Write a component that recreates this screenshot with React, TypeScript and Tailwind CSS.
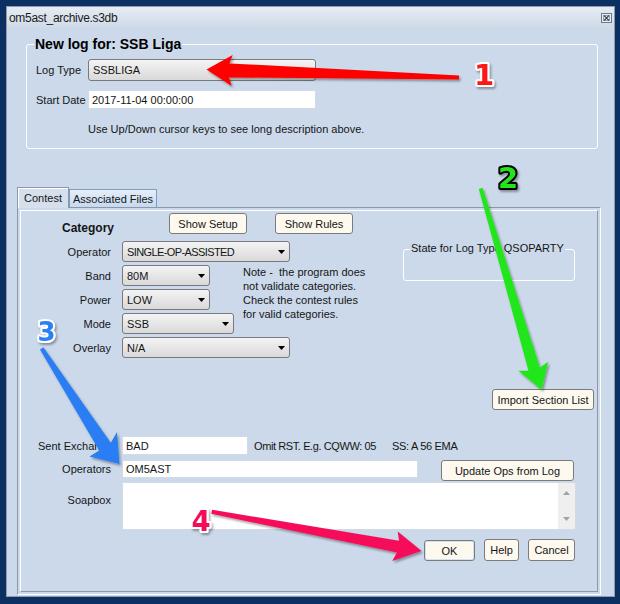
import React from 'react';

type BoxProps = { className?: string; children?: React.ReactNode };

const Caret: React.FC<{ color?: string }> = ({ color = '#000' }) => (
  <svg width="7" height="4" viewBox="0 0 7 4" className="shrink-0">
    <polygon points="0,0 7,0 3.5,4" fill={color} />
  </svg>
);

const CaretUp: React.FC = () => (
  <svg width="7" height="4" viewBox="0 0 7 4">
    <polygon points="0,4 7,4 3.5,0" fill="#a3a3a3" />
  </svg>
);

const Select: React.FC<BoxProps & { caret?: boolean; textClass?: string }> = ({
  className = '',
  children,
  caret = true,
  textClass = '',
}) => (
  <div
    className={`flex h-[21px] items-center justify-between rounded-[3px] border border-[#7a7a7a] bg-linear-to-b from-[#f4f4f4] to-[#d9d9d9] pl-[4px] pr-[4px] ${className}`}
  >
    <span className={`whitespace-nowrap ${textClass}`}>{children}</span>
    {caret && <Caret />}
  </div>
);

const Input: React.FC<BoxProps> = ({ className = '', children }) => (
  <div className={`flex items-center border border-[#d2dae4] bg-white pl-[3px] ${className}`}>
    <span className="whitespace-nowrap">{children}</span>
  </div>
);

const Button: React.FC<BoxProps> = ({ className = '', children }) => (
  <div
    className={`flex h-[21px] items-center justify-center whitespace-nowrap rounded-[3px] border border-[#7b7b7b] bg-[#fdf9ef] ${className}`}
  >
    {children}
  </div>
);

const Row: React.FC<{ label: string; children: React.ReactNode }> = ({ label, children }) => (
  <div className="flex h-[21px] items-center">
    <div className="w-[90px] text-right">{label}</div>
    <div className="ml-[11px]">{children}</div>
  </div>
);

export default function App() {
  return (
    <div className="relative h-[604px] w-[620px] overflow-hidden bg-[#0b3061] pl-[6px] pt-[6px] font-['Liberation_Sans',Arial,sans-serif] text-[11px] leading-[14px] text-[#151515]">
      <div className="flex h-[591px] w-[609px] flex-col border border-[#8d9cb0] bg-[#cbd9ea]">
        {/* title bar */}
        <div className="flex h-[21px] shrink-0 items-center justify-between bg-linear-to-b from-[#e6ecf3] to-[#cfdae8] pl-[2px] pr-[2px]">
          <span className="text-[12px] tracking-[-0.3px] text-[#1b1b1b]">om5ast_archive.s3db</span>
          <svg width="11" height="10" viewBox="0 0 11 10">
            <rect x="0.5" y="0.5" width="10" height="9" fill="#e9eef4" stroke="#6f7a88" />
            <rect x="2.5" y="2.5" width="6" height="5" fill="none" stroke="#9aa4b0" />
            <path d="M3 2.5 L8 7.5 M8 2.5 L3 7.5" stroke="#3c4652" strokeWidth="1.1" />
          </svg>
        </div>

        {/* new log group */}
        <div className="relative ml-[19px] mt-[16px] h-[105px] w-[572px] rounded-[3px] border border-white pl-[9px]">
          <span className="absolute -top-[9px] left-[7px] bg-[#cbd9ea] px-[1px] text-[14px] font-bold leading-[16px] text-black">
            New log for: SSB Liga
          </span>
          <div className="mt-[14px] flex h-[22px] items-center">
            <div className="w-[52px]">Log Type</div>
            <Select className="h-[22px] w-[228px]" caret={false}>SSBLIGA</Select>
          </div>
          <div className="mt-[9px] flex h-[19px] items-center">
            <div className="w-[52px] whitespace-nowrap">Start Date</div>
            <Input className="h-[19px] w-[228px]">2017-11-04 00:00:00</Input>
          </div>
          <div className="mt-[13px] pl-[52px]">Use Up/Down cursor keys to see long description above.</div>
        </div>

        {/* tabs */}
        <div className="relative z-10 -mb-[1px] ml-[10px] mt-[38px] flex h-[21px] items-end">
          <div className="flex h-[21px] w-[52px] items-center justify-center border border-b-0 border-[#8d97a6] bg-[#d6e0ec] shadow-[inset_1px_1px_0_#fff]">
            Contest
          </div>
          <div className="mb-[1px] flex h-[18px] w-[88px] items-center justify-center border border-b-0 border-[#7c9cc4] bg-linear-to-b from-[#e6effa] to-[#c6d9f0]">
            Associated Files
          </div>
        </div>
        <div className="ml-[10px] h-[388px] w-[584px] border border-b-white border-l-[#8d97a6] border-r-white border-t-[#8d97a6] p-[2px]">
          <div className="flex h-full flex-col border border-b-[#8d97a6] border-l-white border-r-[#8d97a6] border-t-white">
            {/* category header */}
            <div className="mt-[2px] flex h-[21px]">
              <div className="ml-[41px] w-[107px] pt-[8px] text-[12px] font-bold leading-[14px]">Category</div>
              <Button className="w-[78px]">Show Setup</Button>
              <Button className="ml-[28px] w-[78px]">Show Rules</Button>
            </div>

            {/* category fields */}
            <div className="mt-[7px] flex">
              <div className="flex w-[382px] flex-col gap-[3px]">
                <Row label="Operator">
                  <Select className="w-[168px]" textClass="tracking-[-0.6px]">SINGLE-OP-ASSISTED</Select>
                </Row>
                <div className="flex">
                  <div className="flex w-[213px] flex-col gap-[3px]">
                    <Row label="Band">
                      <Select className="w-[88px]">80M</Select>
                    </Row>
                    <Row label="Power">
                      <Select className="w-[88px]">LOW</Select>
                    </Row>
                    <Row label="Mode">
                      <Select className="w-[112px]">SSB</Select>
                    </Row>
                  </div>
                  <div className="ml-[9px] whitespace-nowrap">
                    Note -&nbsp; the program does
                    <br />
                    not validate categories.
                    <br />
                    Check the contest rules
                    <br />
                    for valid categories.
                  </div>
                </div>
                <Row label="Overlay">
                  <Select className="w-[168px]">N/A</Select>
                </Row>
              </div>
              <div className="flex flex-1 flex-col">
                <div className="relative mt-[8px] h-[32px] w-[172px] rounded-[3px] border border-white">
                  <span className="absolute -top-[9px] left-[6px] whitespace-nowrap bg-[#cbd9ea] px-[1px]">
                    State for Log Type QSOPARTY
                  </span>
                </div>
                <Button className="mr-[3px] mt-[108px] w-[102px] self-end">Import Section List</Button>
              </div>
            </div>

            {/* exchange */}
            <div className="mt-[26px] flex h-[19px] items-center">
              <div className="w-[101px] overflow-hidden whitespace-nowrap pl-[17px]">Sent Exchange</div>
              <Input className="h-[19px] w-[126px]">BAD</Input>
              <div className="ml-[6px] w-[138px] whitespace-nowrap tracking-[-0.4px]">Omit RST. E.g. CQWW: 05</div>
              <div className="whitespace-nowrap tracking-[-0.3px]">SS: A 56 EMA</div>
            </div>

            <div className="mt-[5px] flex h-[20px] items-start">
              <div className="w-[90px] text-right leading-[18px]">Operators</div>
              <Input className="ml-[11px] h-[18px] w-[296px]">OM5AST</Input>
              <Button className="ml-[23px] h-[20px] w-[133px]">Update Ops from Log</Button>
            </div>

            <div className="mt-[2px] flex">
              <div className="w-[90px] pt-[11px] text-right">Soapbox</div>
              <div className="ml-[11px] flex h-[48px] w-[454px] border border-[#d2dae4] bg-white">
                <div className="flex-1" />
                <div className="flex w-[17px] flex-col items-center justify-between bg-[#efefef] pb-[8px] pt-[8px]">
                  <CaretUp />
                  <Caret color="#a3a3a3" />
                </div>
              </div>
            </div>

            <div className="mt-[9px] flex items-start justify-end gap-[9px] pr-[22px]">
              <Button className="mt-[1px] w-[51px] border-[#3b83c0] shadow-[inset_0_0_0_1px_#cfe3f5]">OK</Button>
              <Button className="h-[22px] w-[35px]">Help</Button>
              <Button className="h-[22px] w-[47px]">Cancel</Button>
            </div>
          </div>
        </div>
      </div>

      {/* annotation arrows */}
      <svg className="pointer-events-none absolute left-0 top-0" width="620" height="604" viewBox="0 0 620 604">
        <defs>
          <filter id="sh" x="-20%" y="-20%" width="140%" height="140%">
            <feDropShadow dx="1.5" dy="2" stdDeviation="1.2" floodColor="#000" floodOpacity="0.35" />
          </filter>
        </defs>
        <polygon
          points="459.1,75.5 229.4,63.4 232.7,55 206.5,69.5 231.7,86 229,77.4 458.9,79.5"
          fill="#ff0000"
          filter="url(#sh)"
        />
        <polygon
          points="482.6,187.7 539.9,367.4 548.2,361.7 541.7,390 518.4,370.7 528.5,370.8 478.8,188.9"
          fill="#22e61a"
          filter="url(#sh)"
        />
        <polygon
          points="43.4,347.2 110.8,442.8 117,432 119.5,464 89.5,456.5 99.2,450.6 40,349.4"
          fill="#2a7df2"
          filter="url(#sh)"
        />
        <polygon
          points="212.1,509.7 399.1,540.8 397.7,531.5 421.6,551 392.3,560.9 396.9,552.6 211.3,513.7"
          fill="#f5105a"
          filter="url(#sh)"
        />
        <g fontFamily="'DejaVu Sans', sans-serif" fontWeight="bold" textAnchor="middle" strokeLinejoin="round" paintOrder="stroke" filter="url(#sh)">
          <text x="484" y="85" fontSize="29" fill="#ff1414" stroke="#fff" strokeWidth="4">1</text>
          <text x="508" y="188" fontSize="29" fill="#22e61a" stroke="#000" strokeWidth="4">2</text>
          <text x="46.5" y="341" fontSize="26" fill="#2a80f5" stroke="#fff" strokeWidth="4">3</text>
          <text x="201" y="531" fontSize="27.5" fill="#f5105a" stroke="#fff" strokeWidth="4">4</text>
        </g>
      </svg>
    </div>
  );
}
